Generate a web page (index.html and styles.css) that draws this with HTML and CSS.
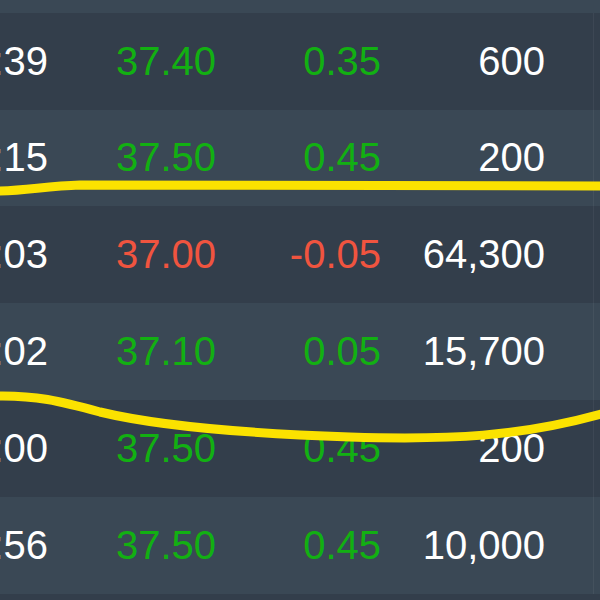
FILE: index.html
```html
<!DOCTYPE html>
<html lang="en">
<head>
  <meta charset="UTF-8" />
  <meta name="viewport" content="width=device-width, initial-scale=1.0"/>
  <title>Time &amp; Sales</title>
  <link rel="stylesheet" href="styles.css">
</head>
<body>

  <div class="tape">
    <!-- row scrolled up out of view -->
    <div class="tick"></div>
    <div class="tick"><span class="time">10:24:39</span><span class="price up">37.40</span><span class="chg up">0.35</span><span class="vol">600</span><span class="pad"></span></div>
    <div class="tick"><span class="time">10:24:15</span><span class="price up">37.50</span><span class="chg up">0.45</span><span class="vol">200</span><span class="pad"></span></div>
    <div class="tick"><span class="time">10:24:03</span><span class="price down">37.00</span><span class="chg down">-0.05</span><span class="vol">64,300</span><span class="pad"></span></div>
    <div class="tick"><span class="time">10:24:02</span><span class="price up">37.10</span><span class="chg up">0.05</span><span class="vol">15,700</span><span class="pad"></span></div>
    <div class="tick"><span class="time">10:24:00</span><span class="price up">37.50</span><span class="chg up">0.45</span><span class="vol">200</span><span class="pad"></span></div>
    <div class="tick"><span class="time">10:23:56</span><span class="price up">37.50</span><span class="chg up">0.45</span><span class="vol">10,000</span><span class="pad"></span></div>
    <div class="tick"></div>
  </div>

  <!-- hand-drawn marker strokes on top of the screenshot -->
  <svg class="marker" width="600" height="600" viewBox="0 0 600 600">
    <path d="M -5 191 C 25 191, 45 186, 80 185 C 200 184, 400 187, 605 186" />
    <path d="M -5 396 C 35 395, 60 401, 100 412 C 150 424, 230 433, 350 437 C 450 440, 520 437, 605 413" />
  </svg>

</body>
</html>
```

FILE: styles.css
```css
html, body {
  margin: 0;
  padding: 0;
  width: 600px;
  height: 600px;
  overflow: hidden;
  background-color: #333e4b;
  font-family: 'Liberation Sans', Arial, sans-serif;
  color: #fff;
}

.tape {
  margin: -84px 0 0 -152px;
  width: 900px;
}

.tick {
  display: flex;
  align-items: center;
  height: 96.8px;
  font-size: 40px;
  background-color: #333e4b;
}

.tick:nth-child(odd) {
  background-color: #3a4855;
}

.tick span {
  display: block;
  text-align: right;
  white-space: nowrap;
}

.time {
  width: 200px;
}

.price {
  width: 168px;
}

.chg {
  width: 165px;
}

.vol {
  width: 164px;
}

.pad {
  width: 48px;
  height: 100%;
  border-right: 1px solid rgba(255, 255, 255, 0.05);
}

.up {
  color: #12b012;
}

.down {
  color: #f0543f;
}

.marker {
  position: absolute;
  top: 0;
  left: 0;
  pointer-events: none;
}

.marker path {
  fill: none;
  stroke: #fbe200;
  stroke-width: 9;
  stroke-linecap: round;
}
```
